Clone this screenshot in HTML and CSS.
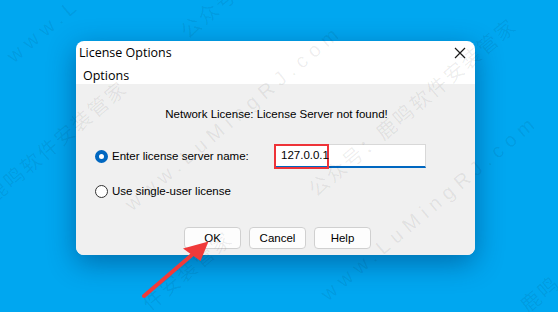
FILE: index.html
```html
<!DOCTYPE html>
<html lang="en">
<head>
    <meta charset="UTF-8">
    <title>License Options</title>
    <link rel="stylesheet" href="styles.css">
</head>
<body>
    <div class="desktop">
        <div class="dialog">
            <div class="titlebar">
                <span class="title">License Options</span>
                <svg class="close" width="12" height="12" viewBox="0 0 12 12">
                    <path d="M1 1 L11 11 M11 1 L1 11" stroke="#1a1a1a" stroke-width="1.2" fill="none"/>
                </svg>
            </div>
            <div class="menubar">Options</div>
            <div class="body">
                <div class="message">Network License: License Server not found!</div>
                <div class="row row-server">
                    <label class="radio">
                        <span class="dot checked"></span>
                        Enter license server name:
                    </label>
                    <div class="server-field">
                        <span class="server-value">127.0.0.1</span>
                    </div>
                </div>
                <div class="row row-single">
                    <label class="radio">
                        <span class="dot"></span>
                        Use single-user license
                    </label>
                </div>
                <div class="buttons">
                    <button type="button" class="btn">OK</button>
                    <button type="button" class="btn">Cancel</button>
                    <button type="button" class="btn">Help</button>
                </div>
            </div>
        </div>

        <!-- overlays: watermark and the red pointer -->
        <div class="watermark">
            <span class="wm wm1">www.LuMingRJ.com</span>
            <span class="wm wm2">www.LuMingRJ.com</span>
            <span class="wm wm3">www.L</span>
            <span class="wm wm4">鹿鸣软件安装管家</span>
            <span class="wm wm5">公众号：鹿鸣软件安装管家</span>
            <span class="wm wm6">公众号</span>
            <span class="wm wm7">件安装管家</span>
            <span class="wm wm8">鹿鸣</span>
        </div>
        <svg class="pointer" width="558" height="312" viewBox="0 0 558 312">
            <path d="M144 296 L193 254" stroke="#f03a3a" stroke-width="4" stroke-linecap="round"/>
            <polygon points="208.5,241.5 183,248.5 200.5,261" fill="#f03a3a"/>
        </svg>
    </div>
</body>
</html>
```

FILE: styles.css
```css
html, body {
    margin: 0;
    padding: 0;
}
.desktop {
    position: relative;
    width: 558px;
    height: 312px;
    box-sizing: border-box;
    padding: 41px 0 0 76px;
    background: #00a7f0;
    overflow: hidden;
}
.dialog {
    width: 399px;
    height: 214px;
    background: #ffffff;
    border-radius: 8px;
    overflow: hidden;
    display: flex;
    flex-direction: column;
    box-shadow: 0 8px 28px rgba(0, 40, 90, 0.45);
}
.titlebar {
    height: 22px;
    display: flex;
    align-items: center;
    justify-content: space-between;
    padding: 0 9px 0 3px;
    font-family: "Open Sans", "Noto Sans", sans-serif;
    font-size: 12.5px;
    color: #000;
}
.title {
    padding-top: 1px;
}
.close {
    margin-top: 1px;
}
.menubar {
    height: 21px;
    box-sizing: border-box;
    padding: 4px 0 0 7px;
    line-height: 17px;
    font-family: "Open Sans", "Noto Sans", sans-serif;
    font-size: 12.5px;
    color: #000;
}
.body {
    flex: 1;
    background: #f0f0f0;
    font-family: "Liberation Sans", Arial, sans-serif;
    font-size: 11.5px;
    color: #000;
    display: flex;
    flex-direction: column;
}
.message {
    text-align: center;
    margin-top: 23px;
    height: 14px;
    line-height: 14px;
    padding-left: 2px;
}
.row {
    display: flex;
    align-items: center;
    padding-left: 19px;
}
.row-server {
    margin-top: 23px;
    height: 24px;
}
.row-single {
    margin-top: 11px;
    height: 24px;
}
.radio {
    display: flex;
    align-items: center;
    gap: 4px;
    width: 179px;
}
.dot {
    width: 11px;
    height: 11px;
    border-radius: 50%;
    border: 1px solid #333;
    background: #fff;
    box-sizing: content-box;
}
.dot.checked {
    width: 5px;
    height: 5px;
    border: 4px solid #0067c0;
}
.server-field {
    width: 152px;
    height: 24px;
    box-sizing: border-box;
    background: #fff;
    border: 1px solid #d8d8d8;
    border-bottom: 2px solid #0067c0;
    position: relative;
}
.server-value {
    position: absolute;
    left: -1px;
    top: -1px;
    width: 55px;
    height: 25px;
    box-sizing: border-box;
    border: 2px solid #ee3338;
    padding: 2px 0 0 5px;
    font-size: 11.5px;
    line-height: 14px;
}
.buttons {
    display: flex;
    justify-content: center;
    gap: 8px;
    margin-top: 24px;
    padding-left: 4px;
}
.btn {
    width: 57px;
    height: 22px;
    padding: 0;
    background: #fdfdfd;
    border: 1px solid #d0d0d0;
    border-radius: 4px;
    font-family: "Liberation Sans", Arial, sans-serif;
    font-size: 11.5px;
    color: #000;
}
.watermark {
    position: absolute;
    left: 0;
    top: 0;
    width: 558px;
    height: 312px;
    pointer-events: none;
}
.wm {
    position: absolute;
    white-space: nowrap;
    transform: rotate(-40deg);
    transform-origin: 0 100%;
    font-family: "Liberation Sans", "Noto Sans CJK SC", sans-serif;
    font-size: 20px;
    letter-spacing: 6px;
    line-height: 20px;
    color: rgba(0, 0, 0, 0.07);
}
.wm1 { left: 134px; top: 194px; }
.wm2 { left: 330px; top: 284px; }
.wm3 { left: 16px; top: 46px; }
.wm4 { left: -4px; top: 186px; letter-spacing: 2px; }
.wm5 { left: 318px; top: 180px; letter-spacing: 2px; }
.wm6 { left: 190px; top: 22px; letter-spacing: 2px; }
.wm7 { left: 152px; top: 294px; letter-spacing: 2px; }
.wm8 { left: 530px; top: 296px; letter-spacing: 2px; }
.pointer {
    position: absolute;
    left: 0;
    top: 0;
}
```
